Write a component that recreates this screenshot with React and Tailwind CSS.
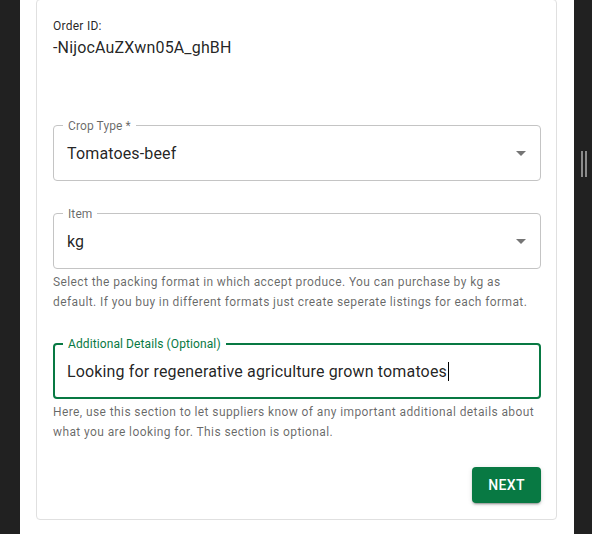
import React from "react";

function Arrow() {
  return (
    <svg
      viewBox="0 0 24 24"
      className="absolute right-[7px] top-1/2 -translate-y-1/2 w-6 h-6 fill-[rgba(0,0,0,0.54)]"
    >
      <path d="M7 10l5 5 5-5z" />
    </svg>
  );
}

function SelectField({ label, value, className = "" }) {
  return (
    <div
      className={`relative h-[56px] rounded-[4px] border border-[#c4c4c4] flex items-center px-[13px] ${className}`}
    >
      <span className="absolute left-[9px] top-0 -translate-y-1/2 bg-white px-[5px] text-[12px] leading-[14px] text-[rgba(0,0,0,0.6)] tracking-[0.1px]">
        {label}
      </span>
      <span className="text-[16px] leading-[23px] text-[rgba(0,0,0,0.87)] tracking-[0.15px]">
        {value}
      </span>
      <Arrow />
    </div>
  );
}

function Helper({ children, className = "" }) {
  return (
    <p
      className={`text-[12px] leading-[20px] tracking-[0.4px] text-[rgba(0,0,0,0.6)] ${className}`}
    >
      {children}
    </p>
  );
}

export default function App() {
  return (
    <div className="flex h-[534px] w-[592px] overflow-hidden bg-[#212121] [font-family:Roboto,sans-serif]">
      <div className="w-[20px] shrink-0" />
      <div className="w-[554px] shrink-0 bg-white pl-4 pr-[17px]">
        <div className="-mt-px rounded-[4px] border border-[#e0e0e0] pl-4 pr-[15px] py-4">
          <p className="text-[12px] leading-[20px] text-[rgba(0,0,0,0.87)] tracking-[0.25px]">
            Order ID:
          </p>
          <p className="text-[16px] leading-[24px] text-[rgba(0,0,0,0.87)] tracking-[0.15px]">
            -NijocAuZXwn05A_ghBH
          </p>

          <SelectField label="Crop Type *" value="Tomatoes-beef" className="mt-[65px]" />

          <SelectField label="Item" value="kg" className="mt-8" />
          <Helper className="mt-[3px]">
            Select the packing format in which accept produce. You can purchase by kg as
            <br />
            default. If you buy in different formats just create seperate listings for each format.
          </Helper>

          <div className="relative mt-[31px] h-[56px] rounded-[4px] border-2 border-[#087943] flex items-center px-[12px]">
            <span className="absolute left-[8px] top-[-1px] -translate-y-1/2 bg-white px-[5px] text-[12px] leading-[14px] text-[#087943] tracking-[0.1px]">
              Additional Details (Optional)
            </span>
            <span className="text-[16px] leading-[23px] text-[rgba(0,0,0,0.87)] tracking-[0.15px] flex items-center">
              Looking for regenerative agriculture grown tomatoes
              <span className="inline-block w-px h-[19px] bg-black ml-px" />
            </span>
          </div>
          <Helper className="mt-[3px]">
            Here, use this section to let suppliers know of any important additional details about
            <br />
            what you are looking for. This section is optional.
          </Helper>

          <div className="mt-[25px] flex justify-end">
            <button className="h-9 rounded-[4px] bg-[#087943] px-4 text-[14px] font-medium uppercase tracking-[0.4px] text-white shadow-[0px_3px_1px_-2px_rgba(0,0,0,0.2),0px_2px_2px_0px_rgba(0,0,0,0.14),0px_1px_5px_0px_rgba(0,0,0,0.12)]">
              Next
            </button>
          </div>
        </div>
      </div>
      <div className="flex-1 flex gap-[2px] pl-[7px] pt-[151px]">
        <div className="w-[2px] h-[26px] bg-[#8c8c8c]" />
        <div className="w-[2px] h-[26px] bg-[#8c8c8c]" />
      </div>
    </div>
  );
}
